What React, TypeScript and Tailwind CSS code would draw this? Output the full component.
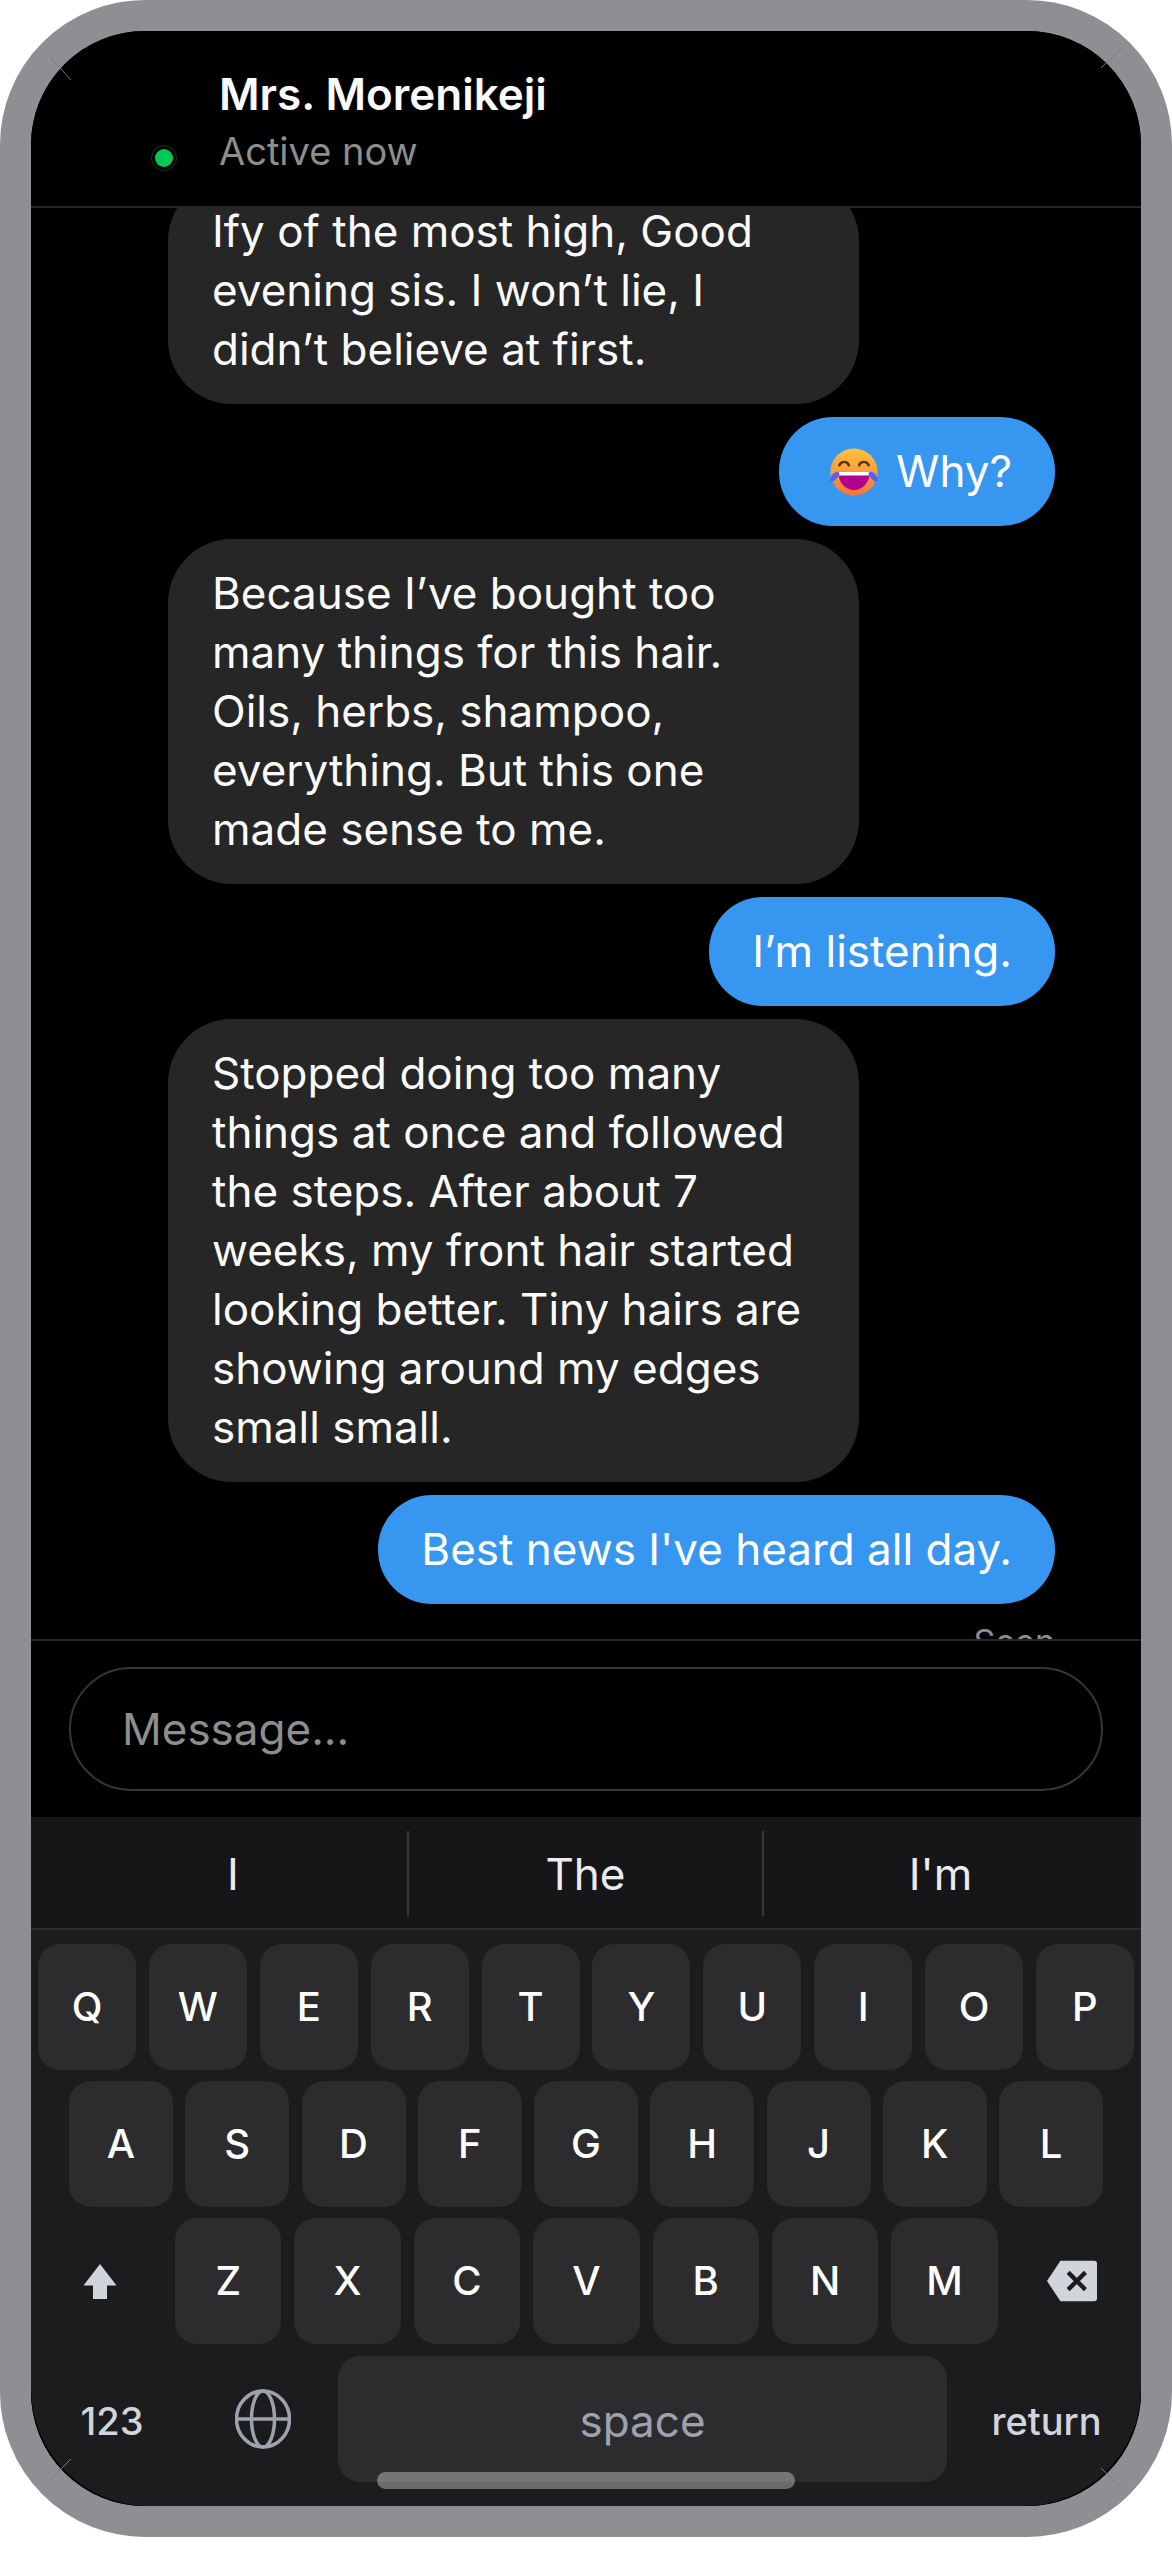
import React from "react";

const R1 = ["Q","W","E","R","T","Y","U","I","O","P"];
const R2 = ["A","S","D","F","G","H","J","K","L"];
const R3 = ["Z","X","C","V","B","N","M"];

function Key({ k, w }: { k: string; w: string }) {
  return (
    <div className={`${w} h-[126px] shrink-0 rounded-[22px] bg-[#2c2c2e] flex items-center justify-center text-[40px] font-medium text-white`}>
      {k}
    </div>
  );
}

function Gray({ children }: { children: React.ReactNode }) {
  return (
    <div className="ml-[137px] w-[691px] rounded-[64px] bg-[#262626] px-[44px] py-[25px] text-[44px] leading-[59px] text-[#fafafa]">
      {children}
    </div>
  );
}

function Blue({ children }: { children: React.ReactNode }) {
  return (
    <div className="self-end mr-[86px] flex items-center rounded-[54px] bg-[#3797f0] px-[43px] py-[25px] text-[44px] leading-[59px] text-white whitespace-nowrap">
      {children}
    </div>
  );
}

function Emoji() {
  return (
    <svg width="54" height="54" viewBox="0 0 48 48" className="ml-[5px] mr-[15px]">
      <defs>
        <linearGradient id="face" x1="0" y1="0" x2="0" y2="1">
          <stop offset="0" stopColor="#fdc33c" />
          <stop offset="1" stopColor="#f4743c" />
        </linearGradient>
      </defs>
      <circle cx="24" cy="24" r="21" fill="url(#face)" />
      <path d="M11 18c1.5-4 7-4 8.500 0M28.500 18c1.500-4 7-4 8.500 0" fill="none" stroke="#5b3413" strokeWidth="2.200" strokeLinecap="round" />
      <path d="M10 24h28c0 9-6 16-14 16s-14-7-14-16z" fill="#b3008f" />
      <path d="M10 24h28l-.6 3H10.600z" fill="#fff" />
      <path d="M3 30c1-3 4-7 7-6 2 1 1 3-1 5-2 3-4 4-5 3.500-.8-.4-1.200-1.500-1-2.500zM45 30c-1-3-4-7-7-6-2 1-1 3 1 5 2 3 4 4 5 3.500.8-.4 1.200-1.500 1-2.500z" fill="#4f63f5" />
    </svg>
  );
}

export default function App() {
  return (
    <div className="h-[2560px] bg-white" style={{ fontFamily: "Inter, sans-serif" }}>
      <div className="relative h-[2537px] w-[1172px] rounded-[145px] border-[31px] border-[#8e8e93] bg-black">
        <div className="flex h-full flex-col overflow-hidden rounded-[114px] bg-black">
          <header className="flex h-[177px] shrink-0 border-b-2 border-[#262626]">
            <div className="ml-[120px] mt-[114px] h-[26px] w-[26px] rounded-full border border-[#0b3d1c] bg-[#00c853] bg-clip-content p-[3px]" />
            <div className="ml-[42px] mt-[36px]">
              <div className="text-[44px] leading-[54px] font-semibold text-[#fafafa]">Mrs. Morenikeji</div>
              <div className="mt-[5px] text-[38px] leading-[50px] text-[#8e8e8e]">Active now</div>
            </div>
          </header>

          <div className="flex min-h-0 flex-1 flex-col gap-[13px] overflow-hidden">
            <div className="-mt-[31px]">
              <Gray>Ify of the most high, Good evening sis. I won’t lie, I didn’t believe at first.</Gray>
            </div>
            <Blue><Emoji />Why?</Blue>
            <Gray>Because I’ve bought too many things for this hair. Oils, herbs, shampoo, everything. But this one made sense to me.</Gray>
            <Blue>I’m listening.</Blue>
            <Gray>Stopped doing too many things at once and followed the steps. After about 7 weeks, my front hair started looking better. Tiny hairs are showing around my edges small small.</Gray>
            <Blue>Best news I've heard all day.</Blue>
            <div className="mr-[86px] -mt-[1px] self-end pt-[5px] text-[34px] leading-[42px] text-[#8e8e8e]">Seen</div>
          </div>

          <div className="shrink-0 border-t-2 border-[#262626] px-[38px] py-[26px]">
            <div className="flex h-[124px] items-center rounded-full border-2 border-[#363636] px-[51px] text-[44px] text-[#8e8e8e]">
              Message...
            </div>
          </div>

          <div className="relative flex h-[689px] shrink-0 flex-col rounded-b-[118px] bg-[#1c1c1e]">
            <div className="flex h-[113px] shrink-0 items-center border-b-2 border-[#2c2c2e] bg-[#161618] pt-[2px] text-[44px] text-[#ebebf0]">
              <div className="flex h-[85px] w-[378px] items-center justify-center border-r-2 border-[#38383a] pl-[28px]">I</div>
              <div className="flex h-[85px] w-[355px] items-center justify-center border-r-2 border-[#38383a]">The</div>
              <div className="flex h-[85px] flex-1 items-center justify-center pr-[24px]">I'm</div>
            </div>
            <div className="flex flex-col gap-[11px] pt-[14px]">
              <div className="flex justify-between px-[7px]">
                {R1.map((k) => <Key key={k} k={k} w="w-[98px]" />)}
              </div>
              <div className="flex justify-between px-[38px]">
                {R2.map((k) => <Key key={k} k={k} w="w-[104px]" />)}
              </div>
              <div className="flex items-center">
                <div className="flex w-[144px] shrink-0 items-center justify-center pr-[6px]">
                  <svg width="34" height="36" viewBox="0 0 34 36"><path d="M17 1 33.500 22.500H24V36H10V22.500H.5z" fill="#d1d5db" /></svg>
                </div>
                <div className="flex gap-[13px]">
                  {R3.map((k) => <Key key={k} k={k} w="w-[106.4px]" />)}
                </div>
                <div className="flex flex-1 items-center justify-center pl-[6px]">
                  <svg width="50" height="42" viewBox="0 0 52 42">
                    <path d="M14 0H49a3 3 0 0 1 3 3V39a3 3 0 0 1-3 3H14L0 21z" fill="#d1d5db" />
                    <path d="M22 12 40 30M40 12 22 30" stroke="#1c1c1e" strokeWidth="4.500" />
                  </svg>
                </div>
              </div>
              <div className="mt-[1px] flex items-center">
                <div className="w-[162px] shrink-0 pt-[4px] text-center text-[38px] font-medium text-[#d1d5db]">123</div>
                <div className="flex w-[145px] shrink-0 items-center justify-center pr-[6px]">
                  <svg width="56" height="60" viewBox="0 0 56 60" fill="none" stroke="#9ca3af" strokeWidth="3.500">
                    <ellipse cx="28" cy="30" rx="26.500" ry="28" />
                    <ellipse cx="28" cy="30" rx="11.500" ry="28" />
                    <path d="M2 30H54" />
                  </svg>
                </div>
                <div className="flex h-[126px] w-[609px] shrink-0 items-center justify-center rounded-[22px] bg-[#2c2c2e] pt-[4px] text-[44px] text-[#9ca3af]">space</div>
                <div className="flex-1 pl-[5px] pt-[4px] text-center text-[38px] font-medium text-[#d1d5db]">return</div>
              </div>
            </div>
            <div className="absolute bottom-[17px] left-[346px] h-[17px] w-[418px] rounded-full bg-white/35" />
          </div>
        </div>
        <svg className="pointer-events-none absolute -left-[31px] -top-[31px]" width="1172" height="2537" fill="none" stroke="#7a7a7e" strokeWidth="1">
          <path d="M50 57 71 80M1122 48 1101 68M50 2480 71 2459M1122 2489 1101 2468" />
        </svg>
      </div>
    </div>
  );
}
